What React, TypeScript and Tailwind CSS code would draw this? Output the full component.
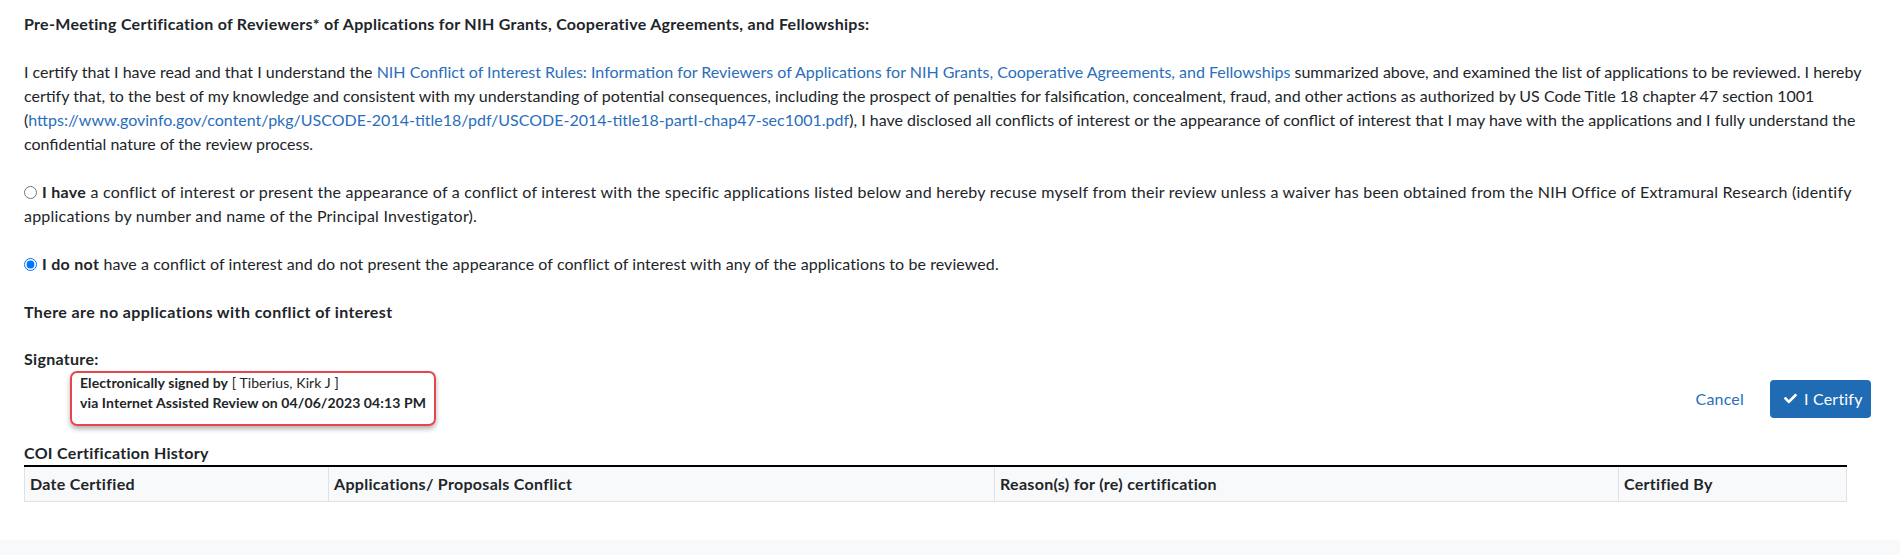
import React from "react";
import { FaCheck } from "react-icons/fa";

export default function App() {
  const font = { fontFamily: "Lato, 'Noto Sans', sans-serif" };
  return (
    <div className="w-[1900px] h-[555px] bg-white text-[#212529] text-[16px] leading-[24px] flex flex-col" style={font}>
      <div className="px-6 pt-[12px] flex-1">
        <p className="font-bold tracking-[0.3px]">
          Pre-Meeting Certification of Reviewers* of Applications for NIH Grants, Cooperative Agreements, and Fellowships:
        </p>
        <p className="mt-[24px]">
          I certify that I have read and that I understand the{" "}
          <a className="text-[#2a6ebb]">
            NIH Conflict of Interest Rules: Information for Reviewers of Applications for NIH Grants, Cooperative Agreements, and Fellowships
          </a>{" "}
          summarized above, and examined the list of applications to be reviewed. I hereby certify that, to the best of my knowledge and consistent with my understanding of potential consequences, including the prospect of penalties for falsification, concealment, fraud, and other actions as authorized by US Code Title 18 chapter 47 section 1001 (
          <a className="text-[#2a6ebb]">https://www.govinfo.gov/content/pkg/USCODE-2014-title18/pdf/USCODE-2014-title18-partI-chap47-sec1001.pdf</a>
          ), I have disclosed all conflicts of interest or the appearance of conflict of interest that I may have with the applications and I fully understand the confidential nature of the review process.
        </p>
        <p className="mt-[24px] tracking-[0.22px]">
          <input type="radio" name="coi" className="w-[13px] h-[13px] mr-[5px] align-[-1px]" />
          <b className="tracking-[0.3px]">I have</b> a conflict of interest or present the appearance of a conflict of interest with the specific applications listed below and hereby recuse myself from their review unless a waiver has been obtained from the NIH Office of Extramural Research (identify applications by number and name of the Principal Investigator).
        </p>
        <p className="mt-[24px] tracking-[0.08px]">
          <input type="radio" name="coi" defaultChecked className="w-[13px] h-[13px] mr-[5px] align-[-1px]" />
          <b className="tracking-[0.3px]">I do not</b> have a conflict of interest and do not present the appearance of conflict of interest with any of the applications to be reviewed.
        </p>
        <p className="mt-[24px] font-bold tracking-[0.4px]">There are no applications with conflict of interest</p>
        <p className="mt-[23px] font-bold tracking-[0.3px]">Signature:</p>
        <div className="flex items-center justify-between pr-[5px]">
          <div className="ml-[46px] w-[366px] h-[55px] border-2 border-[#e3474d] rounded-[7px] shadow-[0_3px_5px_rgba(0,0,0,0.3)] pl-[8px] text-[14px] leading-[20px] tracking-[0.1px]">
            <div>
              <span className="font-bold">Electronically signed by</span> [ Tiberius, Kirk J ]
            </div>
            <div className="font-bold">via Internet Assisted Review on 04/06/2023 04:13 PM</div>
          </div>
          <div className="flex items-center gap-[26px]">
            <a className="text-[#2a6ebb] tracking-[0.2px]">Cancel</a>
            <button className="h-[38px] w-[101px] pl-[13px] rounded-[4px] bg-[#1f6bb4] text-white flex items-center gap-[6px] tracking-[0.2px]">
              <FaCheck className="w-[15px] h-[13px]" />
              I Certify
            </button>
          </div>
        </div>
        <p className="mt-[15px] font-bold tracking-[0.3px]">COI Certification History</p>
        <table className="table-fixed w-[1822px] border-collapse">
          <colgroup>
            <col className="w-[304px]" />
            <col className="w-[666px]" />
            <col className="w-[624px]" />
            <col className="w-[228px]" />
          </colgroup>
          <thead>
            <tr className="bg-[#f8f9fa] border-t-2 border-black">
              <th className="text-left font-bold tracking-[0.3px] px-[5px] py-[5px] border border-[#dee2e6] border-t-0">Date Certified</th>
              <th className="text-left font-bold tracking-[0.3px] px-[5px] py-[5px] border border-[#dee2e6] border-t-0">Applications/ Proposals Conflict</th>
              <th className="text-left font-bold tracking-[0.3px] px-[5px] py-[5px] border border-[#dee2e6] border-t-0">Reason(s) for (re) certification</th>
              <th className="text-left font-bold tracking-[0.3px] px-[5px] py-[5px] border border-[#dee2e6] border-t-0">Certified By</th>
            </tr>
          </thead>
        </table>
      </div>
      <div className="h-[15px] bg-[#f8f9fa]" />
    </div>
  );
}
